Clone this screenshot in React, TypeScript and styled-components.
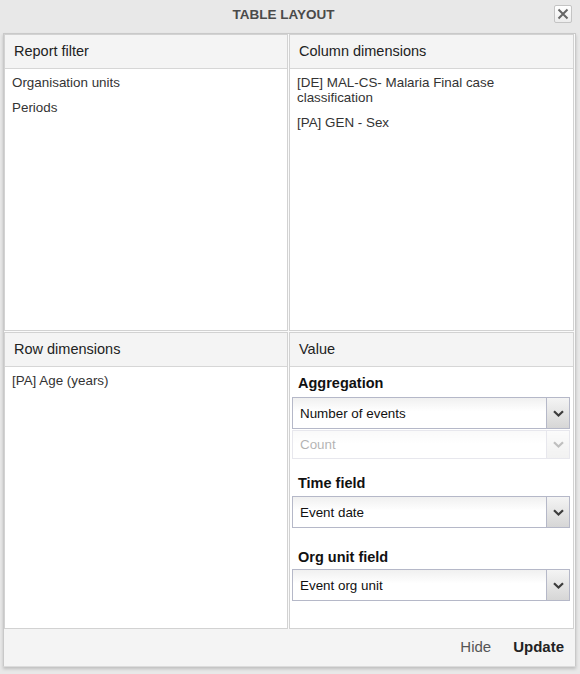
import React from "react";
import styled, { createGlobalStyle } from "styled-components";

const Global = createGlobalStyle`
  html, body { margin: 0; padding: 0; background: #e8e8e8; }
  body { font-family: "Liberation Sans", Arial, sans-serif; }
  * { box-sizing: border-box; }
`;

const Window = styled.div`
  width: 580px;
  height: 674px;
  background: #e8e8e8;
  display: flex;
  flex-direction: column;
  padding: 0 4px 0 3px;
`;

const TitleBar = styled.div`
  height: 33px;
  display: flex;
  align-items: center;
  justify-content: center;
  position: relative;
  font-weight: bold;
  font-size: 13.5px;
  color: #4a4a4a;
  padding: 0 12px 5px 0;
`;

const CloseButton = styled.div`
  position: absolute;
  right: 4px;
  top: 5px;
  width: 18px;
  height: 18px;
  border: 1px solid #c4c4c4;
  border-radius: 2px;
  background: linear-gradient(#ffffff, #ececec);
  display: flex;
  align-items: center;
  justify-content: center;
`;

const Body = styled.div`
  border: 1px solid #c9c9c9;
  border-bottom-color: #dcdcdc;
  background: #f4f4f4;
  display: flex;
  flex-direction: column;
  box-shadow: 0 2px 3px rgba(0, 0, 0, 0.18);
`;

const Grid = styled.div`
  display: grid;
  grid-template-columns: 284px 285px;
  grid-template-rows: 297px 297px;
  column-gap: 1px;
  row-gap: 1px;
  background: #fafafa;
`;

const Panel = styled.div`
  border: 1px solid #d2d2d2;
  background: #fff;
  display: flex;
  flex-direction: column;
`;

const PanelHeader = styled.div`
  height: 34px;
  flex: none;
  background: #f4f4f4;
  border-bottom: 1px solid #d6d6d6;
  display: flex;
  align-items: center;
  padding: 0 0 1px 9px;
  font-size: 14.5px;
  color: #222;
`;

const List = styled.div`
  padding: 1px 20px 0 7px;
`;

const Item = styled.div`
  font-size: 13.4px;
  line-height: 15px;
  padding: 5px 0;
  color: #333;
`;

const ValueBody = styled.div`
  padding: 8px 3px 0 2px;
  display: flex;
  flex-direction: column;
`;

const Label = styled.div<{ $top: number; $bottom?: number }>`
  font-weight: bold;
  font-size: 14.5px;
  line-height: 17px;
  color: #111;
  padding-left: 6px;
  margin-top: ${(p) => p.$top}px;
  margin-bottom: ${(p) => p.$bottom ?? 5}px;
`;

const Combo = styled.div<{ $disabled?: boolean; $h?: number }>`
  height: ${(p) => p.$h ?? 32}px;
  display: flex;
  border: 1px solid #b5b8c8;
  background: linear-gradient(#f0f0f0, #ffffff 45%);
  opacity: ${(p) => (p.$disabled ? 0.32 : 1)};
  margin-bottom: 1px;
`;

const ComboText = styled.div`
  flex: 1;
  display: flex;
  align-items: center;
  padding-left: 7px;
  font-size: 13.4px;
  color: #111;
`;

const Trigger = styled.div`
  width: 23px;
  border-left: 1px solid #b5b8c8;
  background: linear-gradient(#f4f4f4, #d6d6d6);
  display: flex;
  align-items: center;
  justify-content: center;
`;

const Footer = styled.div`
  height: 37px;
  display: flex;
  align-items: center;
  justify-content: flex-end;
  gap: 22px;
  padding: 0 11px 3px 0;
  font-size: 15px;
  background: #f4f4f4;
`;

const FooterButton = styled.span<{ $primary?: boolean }>`
  color: ${(p) => (p.$primary ? "#222" : "#555")};
  font-weight: ${(p) => (p.$primary ? "bold" : "normal")};
`;

const Chevron = () => (
  <svg width="11" height="7" viewBox="0 0 11 7">
    <path d="M1 1.2 L5.5 5.5 L10 1.2" fill="none" stroke="#3c3c3c" strokeWidth="2.2" />
  </svg>
);

const SelectBox = ({ text, disabled, h }: { text: string; disabled?: boolean; h?: number }) => (
  <Combo $disabled={disabled} $h={h}>
    <ComboText>{text}</ComboText>
    <Trigger>
      <Chevron />
    </Trigger>
  </Combo>
);

export default function App() {
  return (
    <>
      <Global />
      <Window>
        <TitleBar>
          TABLE LAYOUT
          <CloseButton>
            <svg width="12" height="12" viewBox="0 0 12 12">
              <path d="M1.5 1.5 L10.5 10.5 M10.5 1.5 L1.5 10.5" stroke="#666" strokeWidth="2" />
            </svg>
          </CloseButton>
        </TitleBar>
        <Body>
          <Grid>
            <Panel>
              <PanelHeader>Report filter</PanelHeader>
              <List>
                <Item>Organisation units</Item>
                <Item>Periods</Item>
              </List>
            </Panel>
            <Panel>
              <PanelHeader>Column dimensions</PanelHeader>
              <List>
                <Item>[DE] MAL-CS- Malaria Final case classification</Item>
                <Item>[PA] GEN - Sex</Item>
              </List>
            </Panel>
            <Panel>
              <PanelHeader>Row dimensions</PanelHeader>
              <List>
                <Item>[PA] Age (years)</Item>
              </List>
            </Panel>
            <Panel>
              <PanelHeader>Value</PanelHeader>
              <ValueBody>
                <Label $top={0}>Aggregation</Label>
                <SelectBox text="Number of events" />
                <SelectBox text="Count" disabled h={29} />
                <Label $top={15} $bottom={4}>Time field</Label>
                <SelectBox text="Event date" />
                <Label $top={20} $bottom={3}>Org unit field</Label>
                <SelectBox text="Event org unit" />
              </ValueBody>
            </Panel>
          </Grid>
          <Footer>
            <FooterButton>Hide</FooterButton>
            <FooterButton $primary>Update</FooterButton>
          </Footer>
        </Body>
      </Window>
    </>
  );
}
